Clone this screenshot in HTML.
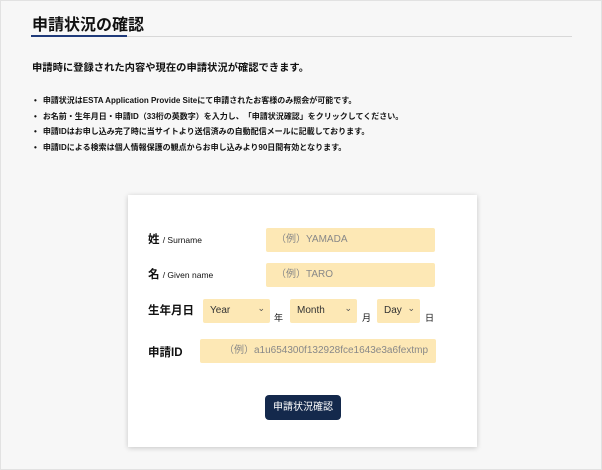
<!DOCTYPE html>
<html><head><meta charset="utf-8"><style>
*{box-sizing:border-box;margin:0;padding:0}
body{width:602px;height:470px;background:#f7f7f7;font-family:"Liberation Sans","Noto Sans CJK JP",sans-serif;color:#111;position:relative;overflow:hidden;border:1px solid #e2e2e2}
.a{position:absolute;white-space:nowrap}
h1{position:absolute;left:31px;top:10px;font-size:16px;font-weight:bold}
.line{position:absolute;left:30px;top:35px;width:541px;height:1px;background:#d8d8d8}
.bl{position:absolute;left:30px;top:34px;width:96px;height:2px;background:#1f3a7a}
.sub{left:31px;top:58px;font-size:10.3px;font-weight:bold}
ul{position:absolute;left:33px;top:94px;list-style:none;font-size:8px;font-weight:bold}
ul li{height:15.5px;line-height:11px}
ul li:before{content:"•";margin-right:6px}
.card{position:absolute;left:127px;top:194px;width:349px;height:252px;background:#fff;box-shadow:0 1px 5px rgba(0,0,0,.2)}
.in{position:absolute;background:#fde8b5;border-radius:2px;font-size:10px;color:#888;line-height:24px;height:24px}
.lb{font-weight:bold;font-size:11.5px}
.lb small{font-weight:normal;font-size:8.5px}
.sel{color:#333}
.sel:after{content:"⌄";position:absolute;right:5px;top:-3px;font-size:9px;color:#555}
.u{font-size:9px}
.btn{position:absolute;left:264px;top:394px;width:76px;height:25px;background:#14294c;border-radius:4px;color:#fff;font-size:10px;text-align:center;line-height:25px}
</style></head><body>
<h1>申請状況の確認</h1>
<div class="line"></div><div class="bl"></div>
<div class="a sub">申請時に登録された内容や現在の申請状況が確認できます。</div>
<ul>
<li>申請状況はESTA Application Provide Siteにて申請されたお客様のみ照会が可能です。</li>
<li>お名前・生年月日・申請ID（33桁の英数字）を入力し、「申請状況確認」をクリックしてください。</li>
<li>申請IDはお申し込み完了時に当サイトより送信済みの自動配信メールに記載しております。</li>
<li>申請IDによる検索は個人情報保護の観点からお申し込みより90日間有効となります。</li>
</ul>
<div class="card"></div>
<div class="a lb" style="left:147px;top:230px">姓 <small>/ Surname</small></div>
<div class="in" style="left:265px;top:227px;width:169px;padding-left:10px">（例）YAMADA</div>
<div class="a lb" style="left:147px;top:265px">名 <small>/ Given name</small></div>
<div class="in" style="left:265px;top:262px;width:169px;padding-left:10px">（例）TARO</div>
<div class="a lb" style="left:147px;top:301px">生年月日</div>
<div class="in sel" style="left:202px;top:298px;width:67px;padding-left:7px">Year</div>
<div class="a u" style="left:273px;top:310px">年</div>
<div class="in sel" style="left:289px;top:298px;width:67px;padding-left:7px">Month</div>
<div class="a u" style="left:361px;top:310px">月</div>
<div class="in sel" style="left:376px;top:298px;width:43px;padding-left:7px">Day</div>
<div class="a u" style="left:424px;top:310px">日</div>
<div class="a lb" style="left:147px;top:343px">申請ID</div>
<div class="in" style="left:199px;top:338px;width:236px;padding-left:24px">（例）a1u654300f132928fce1643e3a6fextmp</div>
<div class="btn">申請状況確認</div>
</body></html>
